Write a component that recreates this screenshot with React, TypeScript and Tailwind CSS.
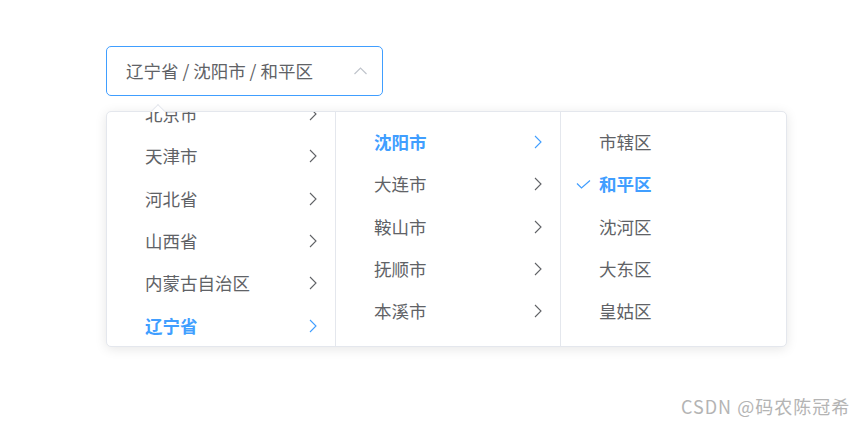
import React from 'react';

const provinces = ['北京市', '天津市', '河北省', '山西省', '内蒙古自治区', '辽宁省'];
const cities = ['沈阳市', '大连市', '鞍山市', '抚顺市', '本溪市'];
const districts = ['市辖区', '和平区', '沈河区', '大东区', '皇姑区'];

const Arrow: React.FC<{ active?: boolean }> = ({ active }) => (
  <svg width="8" height="14" viewBox="0 0 8 14" fill="none" className="shrink-0">
    <path d="M1 1l6 6-6 6" stroke={active ? '#409eff' : '#606266'} strokeWidth="1.1" />
  </svg>
);

const Row: React.FC<{ label: string; active?: boolean; leaf?: boolean; checked?: boolean }> = ({
  label,
  active,
  leaf,
  checked,
}) => (
  <li
    className={`relative flex items-center h-[42.3px] pl-[38px] pr-[18px] ${
      active ? 'text-[#409eff] font-bold' : 'text-[#606266]'
    }`}
  >
    {checked && (
      <svg width="15" height="9" viewBox="0 0 15 9" fill="none" className="absolute left-[15px] top-[17px]">
        <path d="M1 3.5l4.5 4.5L14 0.5" stroke="#409eff" strokeWidth="1.2" />
      </svg>
    )}
    <span className="flex-1 whitespace-nowrap">{label}</span>
    {!leaf && <Arrow active={active} />}
  </li>
);

export default function App() {
  return (
    <div
      className="relative w-[867px] h-[424px] bg-white pl-[106px] pt-[46px] text-[17.5px]"
      style={{ fontFamily: '"Noto Sans CJK SC", "Noto Sans", sans-serif' }}
    >
      {/* Input */}
      <div className="flex items-center w-[277px] h-[50px] border border-[#409eff] rounded-[5px] pl-[19px] pr-[15px]">
        <span className="flex-1 text-[#606266]">辽宁省 / 沈阳市 / 和平区</span>
        <svg width="13" height="8" viewBox="0 0 13 8" fill="none">
          <path d="M0.5 7l6-6 6 6" stroke="#c0c4cc" strokeWidth="1.2" />
        </svg>
      </div>

      {/* Dropdown */}
      <div className="relative mt-[15px] w-[681px] h-[236px] flex border border-[#e4e7ed] rounded-[5px] bg-white shadow-[0_2px_12px_0_rgba(0,0,0,0.1)]">
        <div className="absolute -top-[6px] left-[46px] w-[10px] h-[10px] rotate-45 bg-white border-l border-t border-[#e4e7ed]" />

        <div className="w-[229px] border-r border-[#e4e7ed] overflow-hidden">
          <ul className="-mt-[19px]">
            {provinces.map(p => (
              <Row key={p} label={p} active={p === '辽宁省'} />
            ))}
          </ul>
        </div>

        <div className="w-[225px] border-r border-[#e4e7ed] overflow-hidden">
          <ul className="pt-[9px]">
            {cities.map(c => (
              <Row key={c} label={c} active={c === '沈阳市'} />
            ))}
          </ul>
        </div>

        <div className="flex-1 overflow-hidden">
          <ul className="pt-[9px]">
            {districts.map(d => (
              <Row key={d} label={d} leaf active={d === '和平区'} checked={d === '和平区'} />
            ))}
          </ul>
        </div>
      </div>

      <div className="absolute left-[681px] top-[393px] text-[18px] tracking-[1px] text-[#b4b4b4] whitespace-nowrap">
        CSDN @码农陈冠希
      </div>
    </div>
  );
}
